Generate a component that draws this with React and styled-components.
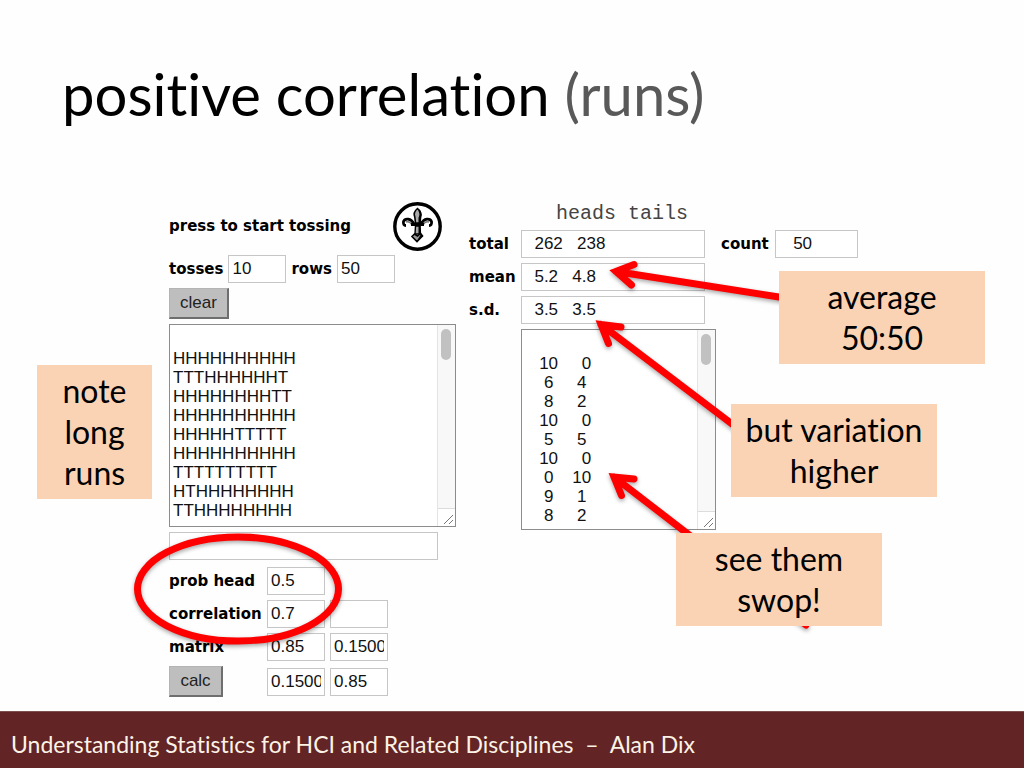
import React from "react";
import styled, { createGlobalStyle } from "styled-components";

const GlobalStyle = createGlobalStyle`
  * { box-sizing: border-box; }
  body { margin: 0; background: #fff; font-variant-ligatures: none; }
`;

const slideFont = `Lato, "Open Sans", sans-serif`;
const formFont = `"Liberation Sans", Arial, sans-serif`;
const labelFont = `"DejaVu Sans", Verdana, sans-serif`;

const Slide = styled.div`
  position: relative;
  display: flex;
  flex-direction: column;
  min-height: 100vh;
  overflow: hidden;
  background: #fefefe;
  color: #000;
`;

const Title = styled.h1`
  margin: 0;
  padding: 58px 62px 72px;
  font: 400 58px/72px ${slideFont};
  font-variant-ligatures: none;
`;

const Muted = styled.span`
  color: #595959;
`;

const Demo = styled.main`
  flex: 1;
  display: flex;
  align-items: flex-start;
  gap: 13px;
  padding-left: 169px;
`;

const Panel = styled.form`
  display: flex;
  flex-direction: column;
  gap: 5px;
`;

const Row = styled.div`
  display: flex;
  align-items: center;
  gap: 5px;
`;

const StartRow = styled(Row)`
  justify-content: space-between;
  height: 48px;
  padding-right: 14px;
`;

const Group = styled.div`
  display: flex;
  flex-direction: column;
  align-items: flex-start;
  gap: 5px;
  padding-top: 2px;
`;

const Label = styled.label`
  flex: none;
  width: ${(p) => (p.$w ? `${p.$w}px` : "auto")};
  font: 700 15px/28px ${labelFont};
  white-space: nowrap;
`;

const Field = styled.input`
  width: ${(p) => p.$w || 58}px;
  height: 28px;
  padding: 0 3px;
  border: 1px solid #c6c6c6;
  border-radius: 0;
  background: #fff;
  color: #111;
  font: 400 17px ${formFont};
  outline: none;
`;

const Button = styled.button`
  align-self: flex-start;
  width: ${(p) => p.$w}px;
  height: 31px;
  padding: 0;
  border: 1px solid #b4b4b4;
  border-right: 2px solid #6e6e6e;
  border-bottom: 2px solid #6e6e6e;
  background: #bebebe;
  color: #222;
  font: 400 17px ${formFont};
`;

const PlainButton = styled.button`
  display: flex;
  padding: 0;
  border: 0;
  background: none;
`;

const ButtonCell = styled.div`
  display: flex;
  width: 93px;
`;

const ListFrame = styled.div`
  display: flex;
  width: ${(p) => p.$w}px;
  height: ${(p) => p.$h}px;
  border: 1px solid #8c8c8c;
  background: #fff;
`;

const ListText = styled.textarea`
  flex: 1;
  min-width: 0;
  padding: 5px 3px 0;
  border: 0;
  resize: none;
  overflow: hidden;
  background: transparent;
  color: #111;
  font: 400 17px/19px ${formFont};
  white-space: pre;
  outline: none;
`;

const Scroll = styled.div`
  display: flex;
  flex-direction: column;
  justify-content: space-between;
  width: 18px;
  border-left: 1px solid #e4e4e4;
  background: #f8f8f8;
`;

const Thumb = styled.div`
  width: 10px;
  height: 31px;
  margin: 4px 3px;
  border-radius: 5px;
  background: #c1c1c1;
`;

const Corner = styled.div`
  display: flex;
  justify-content: flex-end;
  align-items: flex-end;
  height: 18px;
  border-top: 1px solid #dcdcdc;
  background: #fff;
`;

const Columns = styled.div`
  padding-left: 87px;
  font: 400 20px/23px "Liberation Mono", monospace;
  color: #444;
`;

const ListIndent = styled.div`
  padding-left: 52px;
`;

const LabelledField = styled.div`
  display: flex;
  align-items: center;
`;

const CountField = styled(LabelledField)`
  margin-left: 11px;
`;

const Annotations = styled.svg`
  position: absolute;
  left: 0;
  top: 0;
  pointer-events: none;
  filter: drop-shadow(0 2px 2px rgba(0, 0, 0, 0.35));
`;

const Callout = styled.p`
  position: absolute;
  left: ${(p) => p.$x}px;
  top: ${(p) => p.$y}px;
  width: ${(p) => p.$w}px;
  margin: 0;
  padding: 5px 0 6px;
  background: #fad3b5;
  font: 400 32px/41px ${slideFont};
  font-variant-ligatures: none;
  text-align: center;
  white-space: pre-line;
`;

const Footer = styled.footer`
  padding: 16px 11px 8px;
  border-top: 1px solid #7d5050;
  background: #622424;
  color: #fbf3e6;
  font: 400 23px/32px ${slideFont};
  font-variant-ligatures: none;
  white-space: pre;
`;

const tossRows = `
HHHHHHHHHH
TTTHHHHHHT
HHHHHHHHTT
HHHHHHHHHH
HHHHHTTTTT
HHHHHHHHHH
TTTTTTTTTT
HTHHHHHHHH
TTHHHHHHHH`;

const countRows = `
   10     0
    6     4
    8     2
   10     0
    5     5
   10     0
    0    10
    9     1
    8     2`;

function FleurCoin() {
  return (
    <svg width="49" height="49" viewBox="0 0 49 49" aria-hidden="true">
      <circle cx="24.5" cy="24.5" r="22.7" fill="#fff" stroke="#000" strokeWidth="3.4" />
      <path d="M24.5 6.5 C21.5 9 20.5 12 21.8 15 L22.5 21 H27 L27.6 15 C28.6 12 27.5 9 24.5 6.5Z" fill="#aaa" stroke="#000" strokeWidth="1.6" />
      <path d="M26 8 C28 11 28 13 26.5 16 V21" fill="none" stroke="#000" strokeWidth="2" />
      <path d="M21 22 C18 16 12 16 10.5 19.5 C10 22 11 23.5 13 23.5" fill="none" stroke="#000" strokeWidth="2.8" />
      <path d="M28 22 C31 16 37 16 38.5 19.5 C39 22 38 23.5 36 23.5" fill="none" stroke="#000" strokeWidth="2.8" />
      <path d="M13 20 C16 19 18 21 19 23 M36 20 C33 19 31 21 30 23" fill="none" stroke="#777" strokeWidth="1.4" />
      <path d="M18 22.5 H31" stroke="#000" strokeWidth="3" />
      <path d="M22.5 24 H27 L27.5 32 H22Z" fill="#aaa" stroke="#000" strokeWidth="1.4" />
      <path d="M26.5 24 V32" stroke="#000" strokeWidth="2" />
      <path d="M21.5 32 L19 34.5 L24 39.5 L29.5 34 L27.5 31.5 L24.5 34Z" fill="#999" stroke="#000" strokeWidth="1.6" />
      <path d="M24 39 L30 34 L28 32Z" fill="#000" />
    </svg>
  );
}

function List({ label, value, w, h }) {
  return (
    <ListFrame $w={w} $h={h}>
      <ListText aria-label={label} defaultValue={value} spellCheck={false} />
      <Scroll aria-hidden="true">
        <Thumb />
        <Corner>
          <svg width="14" height="14" viewBox="0 0 14 14">
            <path d="M3 12 L12 3 M8 12 L12 8" stroke="#777" strokeWidth="1" />
          </svg>
        </Corner>
      </Scroll>
    </ListFrame>
  );
}

function Stat({ id, label, value }) {
  return (
    <LabelledField>
      <Label htmlFor={id} $w={52}>{label}</Label>
      <Field id={id} $w={184} defaultValue={value} />
    </LabelledField>
  );
}

export default function App() {
  return (
    <Slide>
      <GlobalStyle />
      <Title>
        positive correlation <Muted>(runs)</Muted>
      </Title>
      <Demo>
        <Panel onSubmit={(e) => e.preventDefault()}>
          <StartRow>
            <Label as="span">press to start tossing</Label>
            <PlainButton type="button" aria-label="start tossing">
              <FleurCoin />
            </PlainButton>
          </StartRow>
          <Row>
            <Label htmlFor="tosses">tosses</Label>
            <Field id="tosses" defaultValue="10" />
            <Label htmlFor="rows">rows</Label>
            <Field id="rows" defaultValue="50" />
          </Row>
          <Button type="button" $w={60}>clear</Button>
          <List label="toss results" value={tossRows} w={287} h={203} />
          <Field aria-label="current row" $w={269} />
          <Group>
            <Row>
              <Label htmlFor="prob" $w={93}>prob head</Label>
              <Field id="prob" defaultValue="0.5" />
            </Row>
            <Row>
              <Label htmlFor="corr" $w={93}>correlation</Label>
              <Field id="corr" defaultValue="0.7" />
              <Field aria-label="correlation second value" />
            </Row>
            <Row>
              <Label htmlFor="m00" $w={93}>matrix</Label>
              <Field id="m00" defaultValue="0.85" />
              <Field aria-label="matrix row 1 column 2" defaultValue="0.1500" />
            </Row>
            <Row>
              <ButtonCell>
                <Button type="button" $w={54}>calc</Button>
              </ButtonCell>
              <Field aria-label="matrix row 2 column 1" defaultValue="0.1500" />
              <Field aria-label="matrix row 2 column 2" defaultValue="0.85" />
            </Row>
          </Group>
        </Panel>
        <Panel onSubmit={(e) => e.preventDefault()}>
          <Columns>heads tails</Columns>
          <Row>
            <Stat id="total" label="total" value="  262   238" />
            <CountField>
              <Label htmlFor="count" $w={54}>count</Label>
              <Field id="count" $w={83} defaultValue="   50" />
            </CountField>
          </Row>
          <Stat id="mean" label="mean" value="  5.2   4.8" />
          <Stat id="sd" label="s.d." value="  3.5   3.5" />
          <ListIndent>
            <List label="heads and tails per row" value={countRows} w={195} h={201} />
          </ListIndent>
        </Panel>
      </Demo>
      <Annotations width="1024" height="711" viewBox="0 0 1024 711" fill="none" stroke="#fe0000" strokeWidth="7" strokeLinecap="round" aria-hidden="true">
        <ellipse cx="238" cy="589" rx="100.5" ry="52" />
        <path d="M634 264.5 L616 271.5 L631.5 285 M616 271.5 L782 297.5" />
        <path d="M621 327 L601 324.5 L608.5 343.5 M601 324.5 L736 427" />
        <path d="M634 479 L614 477 L621.5 495.5 M614 477 L806 625" />
      </Annotations>
      <Callout $x={37} $y={365} $w={115}>{"note\nlong\nruns"}</Callout>
      <Callout $x={779} $y={271} $w={206}>{"average\n50:50"}</Callout>
      <Callout $x={731} $y={404} $w={206}>{"but variation\nhigher"}</Callout>
      <Callout $x={676} $y={533} $w={206}>{"see them\nswop!"}</Callout>
      <Footer>Understanding Statistics for HCI and Related Disciplines  –  Alan Dix</Footer>
    </Slide>
  );
}
